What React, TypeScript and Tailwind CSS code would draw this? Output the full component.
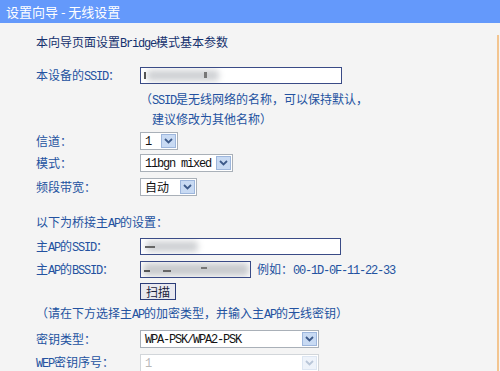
import React from "react";

const CJK = "font-['Noto_Sans_CJK_SC',sans-serif]";

function T({ s }: { s: string }) {
  const parts = s.split(/([\x20-\x7E]+)/).filter((p) => p.length > 0);
  return (
    <>
      {parts.map((p, i) =>
        /^[\x20-\x7E]+$/.test(p) ? (
          <span
            key={i}
            className="font-['Liberation_Mono',monospace] text-[12px] tracking-[-1.2px] whitespace-pre"
          >
            {p}
          </span>
        ) : (
          <span key={i}>{p}</span>
        )
      )}
    </>
  );
}

function Chevron({ color }: { color: string }) {
  return (
    <svg width="9" height="6" viewBox="0 0 9 6">
      <path d="M1 1 L4.5 4.5 L8 1" fill="none" stroke={color} strokeWidth="1.8" />
    </svg>
  );
}

function Select({
  w,
  value,
  disabled = false,
}: {
  w: string;
  value: string;
  disabled?: boolean;
}) {
  return (
    <div
      className={`${w} h-[18px] flex items-center justify-between border bg-white ${
        disabled ? "border-[#d2d6da]" : "border-[#a9b0b8]"
      }`}
    >
      <span
        className={`pl-[4px] text-[12px] leading-[16px] ${
          disabled ? "text-[#b8b8b8]" : "text-[#111]"
        }`}
      >
        <T s={value} />
      </span>
      <div
        className={`w-[15px] h-[14px] mr-[1px] flex items-center justify-center border ${
          disabled
            ? "bg-[#eef3fa] border-[#dde6f2]"
            : "bg-[#c8daf3] border-[#9db6dc]"
        }`}
      >
        <Chevron color={disabled ? "#b9c6d8" : "#3d5a8a"} />
      </div>
    </div>
  );
}

function Input({ w, children }: { w: string; children?: React.ReactNode }) {
  return (
    <div
      className={`${w} h-[17px] relative overflow-hidden border border-[#3a4b86] bg-white`}
    >
      {children}
    </div>
  );
}

function Row({
  label,
  children,
  className = "",
}: {
  label: string;
  children: React.ReactNode;
  className?: string;
}) {
  return (
    <div className={`flex items-center ${className}`}>
      <div className="w-[104px] text-[12px] leading-[14px] text-[#2352a0]">
        <T s={label} />
      </div>
      {children}
    </div>
  );
}

export default function App() {
  return (
    <div className={`w-[500px] h-[371px] overflow-hidden bg-[#f4f4f4] ${CJK}`}>
      <div className="h-[23px] bg-[#6499fb] flex items-center pl-[6px] text-white text-[13px]">
        设置向导 - 无线设置
      </div>
      <div className="h-[348px] w-[499px] border-r-2 border-[#f3c590] pl-[36px]">
        <div className="mt-[12px] text-[12px] leading-[14px] text-[#14316e]">
          <T s="本向导页面设置Bridge模式基本参数" />
        </div>

        <Row label="本设备的SSID：" className="mt-[16px]">
          <Input w="w-[202px]">
            <div className="absolute left-[6px] top-[2px] w-[72px] h-[11px] bg-[#cfd1d4] blur-[3px] rounded" />
            <div className="absolute left-[3px] top-[4px] w-[2px] h-[7px] bg-[#555]" />
            <div className="absolute left-[63px] top-[4px] w-[3px] h-[6px] bg-[#777]" />
          </Input>
        </Row>

        <div className="mt-[6px] pl-[104px] text-[12px] leading-[18px] text-[#2352a0]">
          <div>
            <T s="（SSID是无线网络的名称，可以保持默认，" />
          </div>
          <div className="pl-[12px]">建议修改为其他名称）</div>
        </div>

        <Row label="信道：" className="mt-[4px]">
          <Select w="w-[38px]" value="1" />
        </Row>
        <Row label="模式：" className="mt-[4px]">
          <Select w="w-[93px]" value="11bgn mixed" />
        </Row>
        <Row label="频段带宽：" className="mt-[6px]">
          <Select w="w-[57px]" value="自动" />
        </Row>

        <div className="mt-[19px] text-[12px] leading-[14px] text-[#2352a0]">
          <T s="以下为桥接主AP的设置：" />
        </div>

        <Row label="主AP的SSID：" className="mt-[7px]">
          <Input w="w-[201px]">
            <div className="absolute left-[5px] top-[2px] w-[52px] h-[11px] bg-[#cfd1d4] blur-[3px] rounded" />
            <div className="absolute left-[4px] top-[7px] w-[10px] h-[2px] bg-[#666]" />
          </Input>
        </Row>

        <Row label="主AP的BSSID：" className="mt-[6px]">
          <Input w="w-[111px]">
            <div className="absolute left-[2px] top-[1px] w-[106px] h-[13px] bg-[#c9cbce] blur-[3px] rounded" />
            <div className="absolute left-[3px] top-[8px] w-[6px] h-[2px] bg-[#555]" />
            <div className="absolute left-[22px] top-[8px] w-[8px] h-[2px] bg-[#666]" />
            <div className="absolute left-[60px] top-[5px] w-[6px] h-[2px] bg-[#777]" />
          </Input>
          <span className="ml-[6px] text-[12px] leading-[14px] text-[#2352a0]">
            <T s="例如：00-1D-0F-11-22-33" />
          </span>
        </Row>

        <div className="mt-[5px] pl-[104px]">
          <div className="w-[36px] h-[17px] border border-[#2b3c78] bg-[#e9e9ef] flex items-center justify-center text-[12px] leading-[14px] text-[#1c2440]">
            扫描
          </div>
        </div>

        <div className="mt-[6px] text-[12px] leading-[14px] text-[#2352a0]">
          <T s="（请在下方选择主AP的加密类型，并输入主AP的无线密钥）" />
        </div>

        <Row label="密钥类型：" className="mt-[8px]">
          <Select w="w-[179px]" value="WPA-PSK/WPA2-PSK" />
        </Row>
        <Row label="WEP密钥序号：" className="mt-[6px]">
          <Select w="w-[179px]" value="1" disabled />
        </Row>
        <Row label="" className="mt-[5px]">
          <div className="w-[179px] h-[18px] border border-[#d6dadf] bg-white" />
        </Row>
      </div>
    </div>
  );
}
